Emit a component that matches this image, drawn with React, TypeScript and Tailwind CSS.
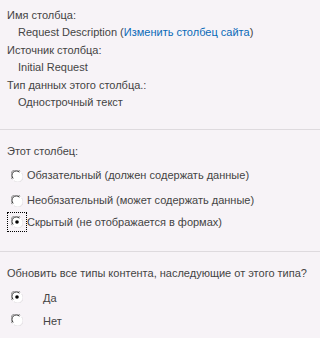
import React from "react";

function ClassicRadio({ checked }: { checked?: boolean }) {
  return (
    <svg width="12" height="12" viewBox="0 0 12 12" className="shrink-0">
      <circle cx="6" cy="6" r="5.5" fill="#ffffff" />
      <path d="M1.2 9.2 A5.3 5.3 0 0 1 9.2 1.2" fill="none" stroke="#8a8a8a" strokeWidth="1" />
      <path d="M2.2 8.4 A4.2 4.2 0 0 1 8.4 2.2" fill="none" stroke="#2e2e2e" strokeWidth="1" />
      <path d="M10.6 3 A5.3 5.3 0 0 1 3 10.6" fill="none" stroke="#e4e2e4" strokeWidth="1" />
      {checked && <circle cx="6" cy="6" r="1.8" fill="#000000" />}
    </svg>
  );
}

export default function App() {
  return (
    <div
      className="w-[320px] h-[338px] bg-[#f7f3f7] text-[#444444] text-[11px] leading-[17px]"
      style={{ fontFamily: "'Liberation Sans', Arial, sans-serif" }}
    >
      <div className="pl-[7px] pt-[7px] pb-[18px] flex flex-col">
        <div>Имя столбца:</div>
        <div className="pl-[11px] mb-[1px]">
          Request Description (<span className="text-[#0a6ab8]">Изменить столбец сайта</span>)
        </div>
        <div>Источник столбца:</div>
        <div className="pl-[11px] mb-[1px]">Initial Request</div>
        <div>Тип данных этого столбца.:</div>
        <div className="pl-[11px]">Однострочный текст</div>
      </div>

      <div className="border-t border-[#dedade]" />

      <div className="pl-[7px] pt-[13px] pb-[19px] flex flex-col">
        <div className="mb-[5px]">Этот столбец:</div>
        <label className="flex items-center h-[21px] mb-[4px]">
          <span className="w-[20px] flex justify-center"><ClassicRadio /></span>
          <span>Обязательный (должен содержать данные)</span>
        </label>
        <label className="flex items-center h-[21px] mb-[1px]">
          <span className="w-[20px] flex justify-center"><ClassicRadio /></span>
          <span>Необязательный (может содержать данные)</span>
        </label>
        <label className="flex items-center h-[20px]">
          <span className="w-[20px] h-[20px] flex items-center justify-center border border-dotted border-black">
            <ClassicRadio checked />
          </span>
          <span>Скрытый (не отображается в формах)</span>
        </label>
      </div>

      <div className="border-t border-[#dedade]" />

      <div className="pl-[7px] pt-[13px] flex flex-col">
        <div className="mb-[4px] whitespace-nowrap">Обновить все типы контента, наследующие от этого типа?</div>
        <label className="flex items-center h-[21px] mb-[2px]">
          <span className="w-[20px] flex justify-center"><ClassicRadio checked /></span>
          <span className="pl-[16px] pt-[3px]">Да</span>
        </label>
        <label className="flex items-center h-[21px]">
          <span className="w-[20px] flex justify-center"><ClassicRadio /></span>
          <span className="pl-[16px] pt-[3px]">Нет</span>
        </label>
      </div>
    </div>
  );
}
